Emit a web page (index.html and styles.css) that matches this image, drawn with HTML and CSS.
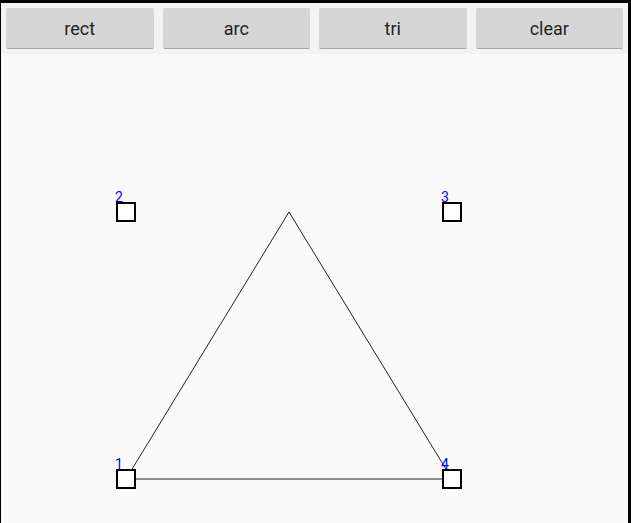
FILE: index.html
```html
<!DOCTYPE html>
<html lang="en">
<head>
  <meta charset="UTF-8">
  <meta name="viewport" content="width=device-width, initial-scale=1.0">
  <title>Shapes</title>
  <link rel="stylesheet" href="styles.css">
</head>
<body>
  <div class="screen">
    <div class="toolbar">
      <button class="btn">rect</button>
      <button class="btn">arc</button>
      <button class="btn">tri</button>
      <button class="btn">clear</button>
    </div>

    <!-- drawing surface, viewBox uses page coordinates -->
    <svg class="canvas" viewBox="1 54 627 469" width="627" height="469">
      <g class="edges">
        <line x1="126" y1="479" x2="289" y2="212"></line>
        <line x1="289" y1="212" x2="452" y2="479"></line>
        <line x1="126" y1="479" x2="452" y2="479"></line>
      </g>
      <g class="handles">
        <rect x="117" y="203" width="18" height="18"></rect>
        <rect x="443" y="203" width="18" height="18"></rect>
        <rect x="117" y="470" width="18" height="18"></rect>
        <rect x="443" y="470" width="18" height="18"></rect>
      </g>
      <g class="labels">
        <text x="115" y="202">2</text>
        <text x="441" y="202">3</text>
        <text x="115" y="469">1</text>
        <text x="441" y="469">4</text>
      </g>
    </svg>
  </div>
</body>
</html>
```

FILE: styles.css
```css
* {
  margin: 0;
  padding: 0;
  box-sizing: border-box;
}

body {
  background-color: #000;
  width: 631px;
  height: 523px;
  overflow: hidden;
  font-family: Roboto, 'Noto Sans', sans-serif;
}

.screen {
  margin: 3px 3px 0 1px;
  height: 520px;
  background-color: #fafafa;
  display: flex;
  flex-direction: column;
}

.toolbar {
  display: flex;
  gap: 9px;
  padding: 5px 5px 5px 5px;
  background-color: #f3f3f3;
}

.btn {
  flex: 1;
  height: 41px;
  background-color: #d6d6d6;
  border: none;
  border-bottom: 1px solid #a8a8a8;
  border-radius: 2px;
  font-family: Roboto, 'Noto Sans', sans-serif;
  font-size: 18px;
  color: #222;
  cursor: pointer;
}

.btn:hover {
  background-color: #cacaca;
}

.canvas {
  display: block;
}

.edges line {
  stroke: #222;
  stroke-width: 1;
}

.handles rect {
  fill: #fff;
  stroke: #000;
  stroke-width: 2;
}

.labels text {
  fill: #0000ff;
  font-family: Roboto, sans-serif;
  font-size: 14px;
}
```
